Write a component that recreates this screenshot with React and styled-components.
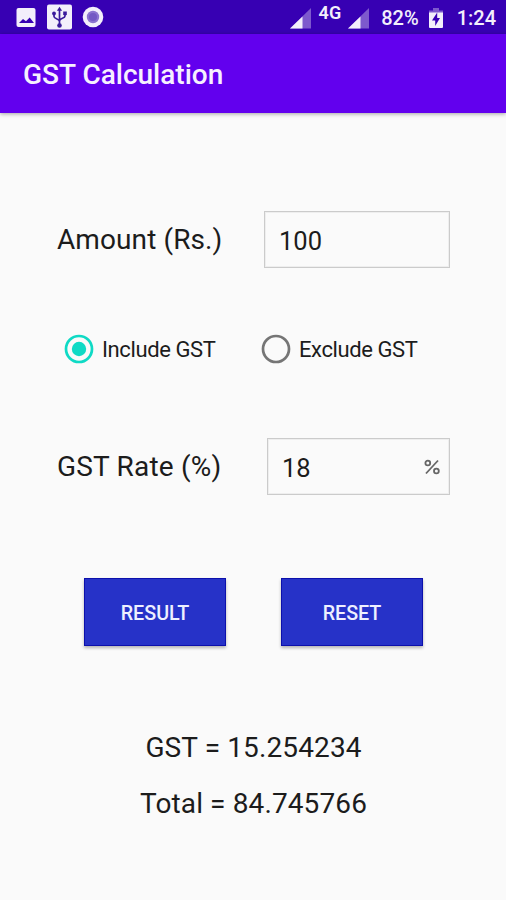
import React, { useState } from "react";
import styled, { createGlobalStyle } from "styled-components";

const GlobalStyle = createGlobalStyle`
  * {
    box-sizing: border-box;
  }

  body {
    margin: 0;
    background: #fafafa;
    font-family: Roboto, sans-serif;
    color: #1c1c1c;
  }
`;

const Screen = styled.div`
  width: 506px;
  height: 900px;
  overflow: hidden;
  background: #fafafa;
`;

const StatusBar = styled.div`
  display: flex;
  justify-content: space-between;
  height: 34px;
  padding: 0 10px 0 15px;
  background: #3700b3;
  color: #f3effb;
`;

const StatusGroup = styled.div`
  display: flex;
  align-items: center;
`;

const StatusIcon = styled.svg`
  display: block;
  flex: none;
  margin-left: ${(props) => props.$gap || 0}px;
`;

const StatusText = styled.span`
  font-size: ${(props) => props.$size || 20}px;
  font-weight: ${(props) => props.$weight || 500};
  line-height: 24px;
  margin-left: ${(props) => props.$gap || 0}px;
  padding-top: ${(props) => props.$drop || 0}px;
  padding-bottom: ${(props) => props.$lift || 0}px;
`;

const AppBar = styled.header`
  display: flex;
  align-items: center;
  height: 79px;
  padding: 3px 23px 0;
  background: #6200ee;
  box-shadow: 0 1px 4px rgba(0, 0, 0, 0.35);
`;

const Title = styled.h1`
  margin: 0;
  color: #f6f0ff;
  font-size: 28px;
  font-weight: 500;
  line-height: 36px;
`;

const Form = styled.main`
  display: flex;
  flex-direction: column;
  padding-top: 98px;
`;

const FieldRow = styled.label`
  display: flex;
  align-items: center;
  justify-content: space-between;
  height: 57px;
  padding: 0 56px 0 57px;
`;

const FieldLabel = styled.span`
  padding-top: 1px;
  font-size: 28px;
  line-height: 34px;
  letter-spacing: ${(props) => props.$spacing || 0}px;
`;

const FieldBox = styled.span`
  display: flex;
  align-items: center;
  width: ${(props) => props.$width}px;
  height: 57px;
  padding: 2px 9px 0 14px;
  border: 1px solid #cbcbcb;
  box-shadow: inset 0 0 0 1px #eeeeee;
`;

const Input = styled.input`
  flex: 1;
  min-width: 0;
  padding: 0;
  border: 0;
  outline: 0;
  background: transparent;
  color: #1c1c1c;
  font: 400 25.5px Roboto, sans-serif;
`;

const RadioRow = styled.div`
  display: flex;
  height: 30px;
  margin: 66px 0 74px;
  padding-left: 64px;
`;

const RadioOption = styled.button`
  display: flex;
  align-items: center;
  width: 197px;
  padding: 0;
  border: 0;
  background: none;
  color: #1c1c1c;
  font: 400 22px Roboto, sans-serif;
  letter-spacing: -0.4px;
  gap: 8px;
  white-space: nowrap;
`;

const ButtonRow = styled.div`
  display: flex;
  justify-content: center;
  gap: 55px;
  margin-top: 83px;
  padding-left: 1px;
`;

const Button = styled.button`
  width: 142px;
  height: 68px;
  padding: 2px 0 0;
  border: 1px solid #0c10ac;
  background: #2632c8;
  box-shadow: 0 2px 3px rgba(0, 0, 0, 0.28);
  color: #eef0ff;
  font: 500 19.7px Roboto, sans-serif;
`;

const Results = styled.div`
  display: flex;
  flex-direction: column;
  align-items: center;
  gap: 22px;
  padding: 85px 0 0 1px;
`;

const ResultLine = styled.p`
  margin: 0;
  font-size: 28px;
  line-height: 34px;
  letter-spacing: 0.12px;
`;

const PictureIcon = () => (
  <StatusIcon width="22" height="20" viewBox="0 0 22 20">
    <rect x="1.5" y="1" width="19" height="19" rx="2" fill="#f3effb" />
    <path d="M4 16l4-4 3 2.300 3.700-3.800L19 16z" fill="#3700b3" />
  </StatusIcon>
);

const UsbIcon = () => (
  <StatusIcon $gap={9} width="27" height="26" viewBox="0 0 27 26">
    <rect x="1" y="0.5" width="25" height="25" rx="2" fill="#f3effb" />
    <g stroke="#3a1a9c" strokeWidth="1.7" fill="none">
      <path d="M13.5 5v16M8 10v2.5c0 2.3 5.5 2.2 5.5 5M19 9v3c0 2.7-5.5 1.8-5.5 5" />
    </g>
    <g fill="#3a1a9c">
      <path d="M13.5 2.8l2.6 4h-5.2z" />
      <circle cx="8" cy="9.5" r="1.9" />
      <rect x="17.2" y="7.5" width="3.6" height="3.6" />
      <circle cx="13.5" cy="21.5" r="2.3" />
    </g>
  </StatusIcon>
);

const RecordIcon = () => (
  <StatusIcon $gap={9} width="22" height="22" viewBox="0 0 22 22">
    <circle cx="11" cy="11" r="10.3" fill="#f3effb" />
    <circle cx="11" cy="11" r="6.2" fill="#8b73d0" />
    <circle cx="11" cy="11" r="4" fill="#7459c4" />
  </StatusIcon>
);

const SignalIcon = ({ gap }) => (
  <StatusIcon $gap={gap} width="21" height="34" viewBox="0 0 21 34">
    <path d="M21 8v20.500H0z" fill="#7d59cd" />
    <path d="M12.5 16.5v12H0z" fill="#f3effb" />
  </StatusIcon>
);

const BatteryIcon = () => (
  <StatusIcon $gap={10} width="14" height="34" viewBox="0 0 14 34">
    <path d="M4 8h6v2.5h4V14H0v-3.5h4z" fill="#7d59cd" />
    <path d="M0 12.5h14V27a1 1 0 0 1-1 1H1a1 1 0 0 1-1-1z" fill="#f3effb" />
    <path d="M8.200 12.500L3 20.500h3.200V26L11 18H8.200z" fill="#3700b3" />
  </StatusIcon>
);

const RadioIcon = ({ checked }) => (
  <svg width="30" height="30" viewBox="0 0 30 30">
    <circle
      cx="15"
      cy="15"
      r="13"
      fill="none"
      stroke={checked ? "#0fdac5" : "#757575"}
      strokeWidth="2.7"
    />
    {checked && <circle cx="15" cy="15" r="7.2" fill="#0fdac5" />}
  </svg>
);

const PercentIcon = () => (
  <svg width="16" height="18" viewBox="0 0 16 18">
    <g fill="none" stroke="#666" strokeWidth="1.8">
      <circle cx="3.8" cy="4" r="2.4" />
      <circle cx="12.4" cy="12" r="2.4" />
      <path d="M14 1.500L2 14.500" />
    </g>
  </svg>
);

const App = () => {
  const [amount, setAmount] = useState("100");
  const [rate, setRate] = useState("18");
  const [mode, setMode] = useState("include");
  const [result, setResult] = useState({ gst: "15.254234", total: "84.745766" });

  const calculate = () => {
    const value = Number(amount);
    const percent = Number(rate) / 100;
    const gst =
      mode === "include" ? value - value / (1 + percent) : value * percent;
    const total = mode === "include" ? value - gst : value + gst;
    setResult({ gst: gst.toFixed(6), total: total.toFixed(6) });
  };

  const reset = () => {
    setAmount("");
    setRate("");
    setResult(null);
  };

  return (
    <Screen>
      <GlobalStyle />
      <StatusBar>
        <StatusGroup>
          <PictureIcon />
          <UsbIcon />
          <RecordIcon />
        </StatusGroup>
        <StatusGroup>
          <SignalIcon />
          <StatusText $size={18} $weight={600} $gap={8} $lift={8}>
            4G
          </StatusText>
          <SignalIcon gap={7} />
          <StatusText $gap={12} $drop={2}>
            82%
          </StatusText>
          <BatteryIcon />
          <StatusText $gap={14} $drop={2}>
            1:24
          </StatusText>
        </StatusGroup>
      </StatusBar>
      <AppBar>
        <Title>GST Calculation</Title>
      </AppBar>
      <Form>
        <FieldRow>
          <FieldLabel $spacing={0.1}>Amount (Rs.)</FieldLabel>
          <FieldBox $width={186}>
            <Input value={amount} onChange={(e) => setAmount(e.target.value)} />
          </FieldBox>
        </FieldRow>
        <RadioRow>
          <RadioOption onClick={() => setMode("include")}>
            <RadioIcon checked={mode === "include"} />
            Include GST
          </RadioOption>
          <RadioOption onClick={() => setMode("exclude")}>
            <RadioIcon checked={mode === "exclude"} />
            Exclude GST
          </RadioOption>
        </RadioRow>
        <FieldRow>
          <FieldLabel $spacing={0.2}>GST Rate (%)</FieldLabel>
          <FieldBox $width={183}>
            <Input value={rate} onChange={(e) => setRate(e.target.value)} />
            <PercentIcon />
          </FieldBox>
        </FieldRow>
        <ButtonRow>
          <Button onClick={calculate}>RESULT</Button>
          <Button onClick={reset}>RESET</Button>
        </ButtonRow>
        {result && (
          <Results>
            <ResultLine>GST = {result.gst}</ResultLine>
            <ResultLine>Total = {result.total}</ResultLine>
          </Results>
        )}
      </Form>
    </Screen>
  );
};

export default App;
